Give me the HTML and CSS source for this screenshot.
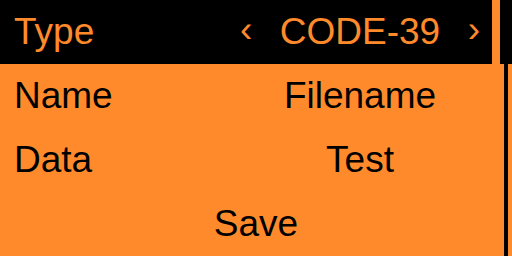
FILE: index.html
```html
<!DOCTYPE html>
<html>
<head>
<meta charset="utf-8">
<link rel="stylesheet" href="styles.css">
</head>
<body>
<div class="screen">
  <div class="list">
    <div class="row selected">
      <span class="label">Type</span>
      <span class="value"><span class="arrow">‹</span><span class="text">CODE-39</span><span class="arrow">›</span></span>
    </div>
    <div class="row">
      <span class="label">Name</span>
      <span class="value"><span class="text">Filename</span></span>
    </div>
    <div class="row">
      <span class="label">Data</span>
      <span class="value"><span class="text">Test</span></span>
    </div>
    <div class="row action">
      <span class="label">Save</span>
    </div>
  </div>
  <div class="scrollbar">
    <div class="handle"></div>
    <div class="track"></div>
  </div>
</div>
</body>
</html>
```
FILE: styles.css
```css
html, body {
  margin: 0;
  padding: 0;
  background: #ff8a2b;
}
.screen {
  width: 512px;
  height: 256px;
  display: flex;
  background: #ff8a2b;
  font-family: "Liberation Sans", Arial, sans-serif;
  font-size: 37px;
  color: #000;
  overflow: hidden;
}
.list {
  width: 500px;
  display: flex;
  flex-direction: column;
}
.row {
  height: 64px;
  line-height: 64px;
  display: grid;
  grid-template-columns: 1fr 240px;
  padding-left: 14px;
  padding-right: 20px;
  white-space: nowrap;
}
.row.selected {
  background: #000;
  color: #ff8a2b;
  margin-right: 8px;
  padding-right: 12px;
}
.value {
  display: flex;
  justify-content: center;
  position: relative;
}
.value .arrow {
  position: absolute;
  top: -2px;
}
.value .arrow:first-child {
  left: 0;
}
.value .arrow:last-child {
  right: 0;
}
.row.action {
  display: flex;
  justify-content: center;
  padding-left: 12px;
  padding-right: 0;
}
.scrollbar {
  width: 12px;
  display: flex;
  flex-direction: column;
  align-items: center;
}
.handle {
  width: 12px;
  height: 64px;
  background: #000;
}
.track {
  width: 4px;
  flex: 1;
  background: #000;
}
```
